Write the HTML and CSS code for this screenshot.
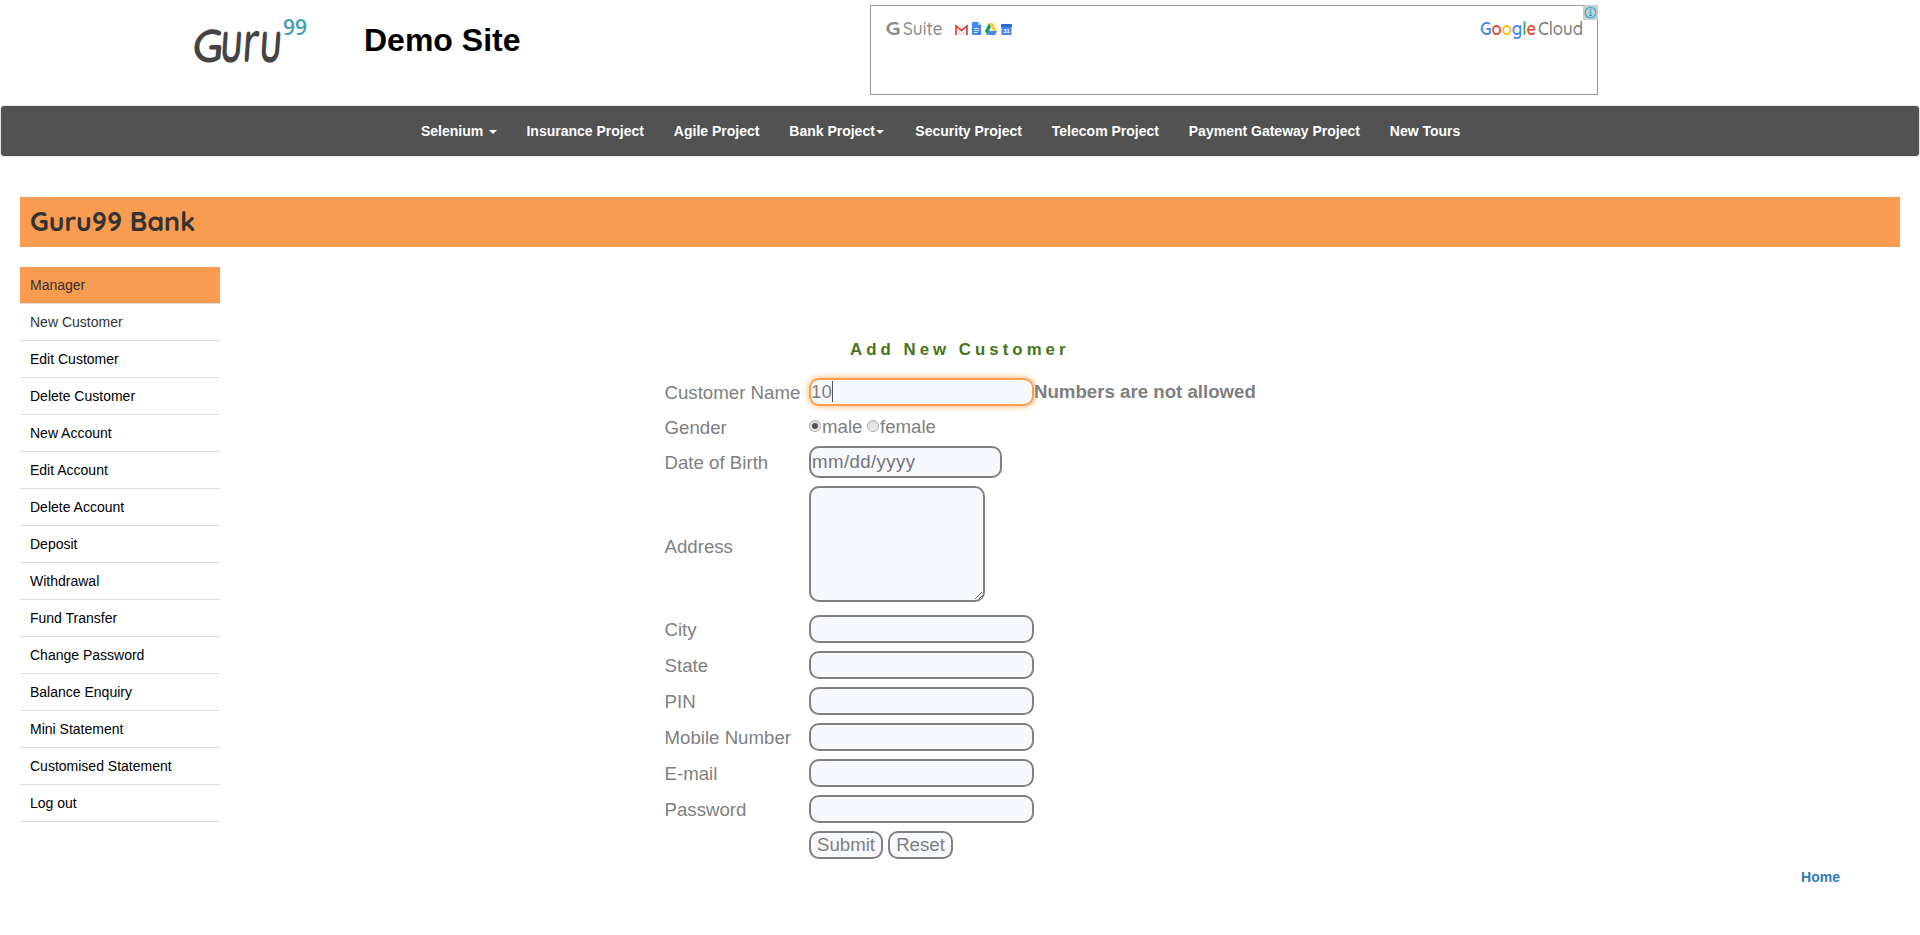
FILE: index.html
```
<!DOCTYPE html>
<html lang="en">
<head>
<meta charset="utf-8">
<title>Guru99 Bank New Customer Entry Page</title>
<link rel="stylesheet" href="styles.css">
</head>
<body>
<header class="top">
  <svg class="logo" width="120" height="60" viewBox="0 0 120 60" role="img" aria-label="Guru99">
    <text class="logo-g" transform="translate(-2 50.500) skewX(-6)" textLength="31" lengthAdjust="spacingAndGlyphs">G</text><text class="logo-uru" transform="translate(26 50.500) skewX(-4)" textLength="62" lengthAdjust="spacingAndGlyphs">uru</text>
    <text class="logo-99" x="90" y="24" textLength="24" lengthAdjust="spacingAndGlyphs">99</text>
  </svg>
  <h2 class="site-title">Demo Site</h2>
  <div class="ad">
    <div class="ad-suite"><svg width="60" height="20"><text class="ad-g" x="-.5" y="17" textLength="15" lengthAdjust="spacingAndGlyphs">G</text><text class="ad-word" x="17" y="17" textLength="39.500" lengthAdjust="spacingAndGlyphs">Suite</text></svg></div>
    <div class="ad-icons">
      <svg width="13" height="10" viewBox="0 0 13 10"><path fill="#e8e8e8" d="M0 0h13v10H0z"/><path fill="none" stroke="#d54b3d" stroke-width="1.700" d="M1 10V1l5.500 4.500L12 1v9"/></svg>
      <svg width="9" height="13" viewBox="0 0 9 13"><path fill="#4285f4" d="M1 0h5l3 3v9a1 1 0 0 1-1 1H1a1 1 0 0 1-1-1V1a1 1 0 0 1 1-1z"/><path fill="#a5c5fb" d="M6 0l3 3H6z"/><path stroke="#e3edfd" d="M2 6.500h5M2 8.500h5M2 10.500h3.500"/></svg>
      <svg width="12" height="12" viewBox="0 0 12 12"><path fill="#0f9d58" d="M4 0l2 3.700L2.200 12 0 8z"/><path fill="#ffcd40" d="M4 0h4l4 8H8z"/><path fill="#4285f4" d="M4 8h8l-2 4H2z"/></svg>
      <svg width="11" height="11" viewBox="0 0 11 11"><path fill="#4285f4" d="M.5 3h10v8H.5z"/><path fill="#3367d6" d="M0 1a1 1 0 0 1 1-1h9a1 1 0 0 1 1 1v2H0z"/><text class="cal" x="5.500" y="9">31</text></svg>
    </div>
    <svg class="ad-cloud" width="103" height="24"><text class="google" x="0" y="17" textLength="56" lengthAdjust="spacingAndGlyphs"><tspan fill="#4285f4">G</tspan><tspan fill="#ea4335">o</tspan><tspan fill="#fbbc05">o</tspan><tspan fill="#4285f4">g</tspan><tspan fill="#34a853">l</tspan><tspan fill="#ea4335">e</tspan></text><text class="ad-word cloud-word" x="58" y="17" textLength="45" lengthAdjust="spacingAndGlyphs">Cloud</text></svg>
    <svg class="ad-info" width="15" height="15" viewBox="0 0 15 15"><path fill="#ccc" d="M0 0h15v15H0z"/><circle cx="7.500" cy="7.500" r="5.300" fill="none" stroke="#16b3c9" stroke-width="1.100"/><path fill="#16b3c9" d="M6.700 3.800h1.600v1.400H6.700zM6.200 6.200h2.100v3.900h.7v.9H6.100v-.9h.7V7.100h-.6z"/></svg>
  </div>
</header>
<nav class="navbar">
  <a>Selenium <b class="caret"></b></a><a>Insurance Project</a><a>Agile Project</a><a class="bank-link">Bank Project<b class="caret"></b></a><a>Security Project</a><a>Telecom Project</a><a>Payment Gateway Project</a><a>New Tours</a>
</nav>
<h2 class="bank">Guru99 Bank</h2>
<div class="layout">
  <ul class="menu">
    <li class="active">Manager</li>
    <li class="current">New Customer</li>
    <li>Edit Customer</li>
    <li>Delete Customer</li>
    <li>New Account</li>
    <li>Edit Account</li>
    <li>Delete Account</li>
    <li>Deposit</li>
    <li>Withdrawal</li>
    <li>Fund Transfer</li>
    <li>Change Password</li>
    <li>Balance Enquiry</li>
    <li>Mini Statement</li>
    <li>Customised Statement</li>
    <li>Log out</li>
  </ul>
  <main class="content">
    <p class="form-title">Add New Customer</p>
    <form class="form">
      <label>Customer Name</label>
      <div class="cell"><div class="field focus">10<i class="cursor"></i></div><b class="error">Numbers are not allowed</b></div>
      <label class="gender">Gender</label>
      <div class="cell gender"><i class="radio on"></i><span class="male">male</span><i class="radio"></i><span class="female">female</span></div>
      <label>Date of Birth</label>
      <div class="cell"><input class="field date" type="text" value="mm/dd/yyyy"></div>
      <label class="addr">Address</label>
      <div class="cell addr-cell"><textarea class="field area"></textarea></div>
      <label>City</label>
      <div class="cell"><input class="field" type="text"></div>
      <label>State</label>
      <div class="cell"><input class="field" type="text"></div>
      <label>PIN</label>
      <div class="cell"><input class="field" type="text"></div>
      <label>Mobile Number</label>
      <div class="cell"><input class="field" type="text"></div>
      <label>E-mail</label>
      <div class="cell"><input class="field" type="text"></div>
      <label>Password</label>
      <div class="cell"><input class="field" type="password"></div>
      <span></span>
      <div class="cell buttons"><button class="btn submit" type="button">Submit</button><button class="btn reset" type="button">Reset</button></div>
    </form>
    <a class="home">Home</a>
  </main>
</div>
</body>
</html>
```
FILE: styles.css
```
* { box-sizing: border-box; }
body {
  margin: 0;
  background: #fff;
  font: 14px/20px "Liberation Sans", Arial, sans-serif;
  color: #333;
  overflow: hidden;
}
svg { display: block; overflow: visible; }

.top { display: flex; align-items: flex-start; height: 105px; padding-left: 193px; }
.logo { margin-top: 11px; }
.logo-g { font: 600 46px Quicksand, Lato, sans-serif; fill: #444; }
.logo-uru { font: 600 58px Quicksand, Lato, sans-serif; fill: #444; }
.logo-99 { font: 600 21px "Open Sans", "Noto Sans", sans-serif; fill: #419fb0; }
.site-title { width: 506px; margin: 22px 0 0 51px; font-size: 32px; line-height: 36px; color: #000; }
.ad { position: relative; display: flex; width: 728px; height: 90px; margin-top: 5px; padding: 12px 14px 0 15px; border: 1px solid #999; }
.ad-suite { width: 69px; }
.ad-g { font: 700 19px Quicksand, Lato, sans-serif; fill: #8a8a8a; }
.ad-word { font: 500 19px Quicksand, Lato, sans-serif; fill: #8a8a8a; }
.cloud-word { fill: #777; }
.ad-icons { display: flex; align-items: flex-end; gap: 4px; height: 17px; }
.ad-icons svg { flex: none; }
.cal { font: 700 6px "Liberation Sans", sans-serif; fill: #fff; text-anchor: middle; }
.ad-cloud { margin-left: auto; }
.google { font: 600 19px Quicksand, Lato, sans-serif; }
.ad-info { position: absolute; top: -1px; right: -1px; }

.navbar { display: flex; height: 52px; padding-left: 405px; border: 1px solid #e7e7e7; border-radius: 4px; background: #525252; }
.navbar a { padding: 15px 14.850px 15px 15px; font-weight: 700; color: #fff; white-space: nowrap; }
.navbar .bank-link { padding-right: 16px; }
.caret { display: inline-block; margin-left: 1.500px; vertical-align: middle; border: 4px solid transparent; border-top-color: #fff; border-bottom: 0; }

.bank { height: 50px; margin: 40px 20px 20px; padding: 0 10px; background: #f99b51; font: 700 26.800px/49px Quicksand, Lato, sans-serif; color: #333; }

.layout { display: flex; margin: 0 20px; }
.menu { width: 200px; margin: 0; padding: 0; list-style: none; color: #000; }
.menu li { height: 37px; padding: 8px 10px; border-bottom: 1px solid #ddd; }
.menu .active { background: #f99b51; background-clip: padding-box; color: #333; }
.menu .current { color: #333; }

.content { display: flex; flex-direction: column; flex: 1; padding: 73px 0 0 444px; }
.form-title { margin: 0 0 18px 186px; font-size: 16.800px; font-weight: 700; letter-spacing: 4.050px; color: #477419; }
.form { display: grid; grid-template-columns: 145px 480px; row-gap: 8px; font-size: 18.670px; line-height: 28px; color: #808080; }
.form label { align-self: center; padding: 1px 0 0 .5px; margin-bottom: -1px; }
.cell { display: flex; align-items: center; }
.field { display: block; width: 225px; height: 28px; margin: 0; padding: 0 1px; border: 2px solid #808080; border-radius: 10px; background: #f8f8ff; font: 18.670px/23px "Liberation Sans", Arial, sans-serif; color: #808080; outline: none; }
.focus { display: flex; padding: 0; border-color: #ff9f49; box-shadow: 0 0 6px #ffa95c; }
.cursor { width: 1px; height: 21px; margin-top: 1px; background: #555; }
.error { line-height: 27px; align-self: flex-start; }
.form .gender { height: 24px; line-height: 24px; }
.radio { display: flex; width: 12px; height: 12px; margin-right: 1px; border: 1px solid #aaa; border-radius: 50%; background: linear-gradient(#dcdcdc, #eee); }
.on::after { content: ""; width: 6px; height: 6px; margin: 2px; border-radius: 50%; background: #555; }
.male { width: 45px; }
.male, .female { padding-top: 1px; }
.date { width: 193px; height: 32px; padding: 0 1px; letter-spacing: .4px; color: #757575; }
.form .addr { padding-bottom: 2px; }
.addr-cell { height: 121px; align-items: flex-start; }
.area { width: 176px; height: 116px; resize: both; }
.btn { height: 28px; padding: 0; border: 2px solid #808080; border-radius: 10px; background: #f8f8ff; font: 18.670px/24px "Liberation Sans", Arial, sans-serif; color: #808080; }
.buttons { gap: 5px; }
.submit { width: 74px; }
.reset { width: 65px; }
.home { align-self: flex-end; margin: 8px 60px 0 0; font-weight: 700; color: #337ab7; }
```
